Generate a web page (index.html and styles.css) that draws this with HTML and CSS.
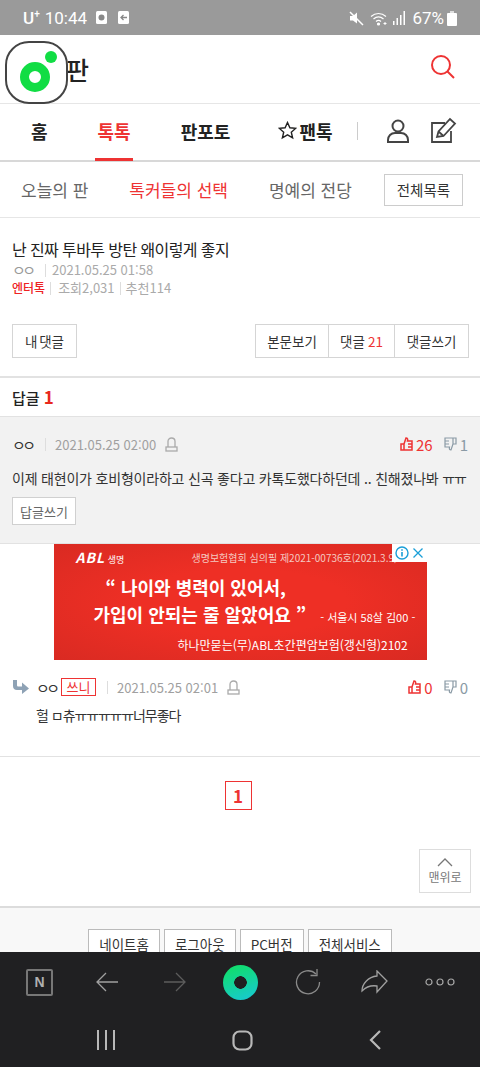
FILE: index.html
```html
<!DOCTYPE html>
<html lang="ko">
<head>
  <meta charset="UTF-8">
  <meta name="viewport" content="width=device-width, initial-scale=1.0">
  <title>네이트 판</title>
  <link rel="stylesheet" href="styles.css">
</head>
<body>
  <div class="status-bar">
    <div class="status-left">
      <span class="carrier">U<sup>+</sup></span>
      <span class="clock">10:44</span>
      <svg class="status-icon" width="12" height="14" viewBox="0 0 12 14"><rect width="11" height="13" rx="1.5" fill="#fff"/><circle cx="5.5" cy="6.5" r="3" fill="#888"/></svg>
      <svg class="status-icon back-note" width="12" height="14" viewBox="0 0 12 14"><rect width="11" height="13" rx="1.5" fill="#fff"/><path d="M9 6.500H3M5.500 4L3 6.500 5.500 9" stroke="#888" stroke-width="1.300" fill="none"/></svg>
    </div>
    <div class="status-right">
      <svg width="15" height="15" viewBox="0 0 15 15"><path d="M1 5h3l4-3.500v11L4 9.500H1z" fill="#fff"/><path d="M1 1l13 13" stroke="#fff" stroke-width="1.500"/></svg>
      <svg class="wifi" width="20" height="15" viewBox="0 0 20 15" fill="none" stroke="#fff" stroke-width="1.200"><path d="M1 5.500c4.500-4 10.500-4 15 0M3.500 8c3-2.600 7-2.600 10 0M6 10.500c1.600-1.300 3.400-1.300 5 0"/><circle cx="8.500" cy="13" r="1" fill="#fff"/><path d="M15 11v3M13.500 12.500h3" stroke-width="1"/></svg>
      <svg width="13" height="14" viewBox="0 0 13 14" fill="#fff"><rect x="0" y="10" width="1.500" height="4"/><rect x="3.500" y="7" width="1.500" height="7"/><rect x="7" y="4" width="1.500" height="10"/><rect x="10.500" y="0" width="1.500" height="14"/></svg>
      <span class="battery-text">67%</span>
      <svg width="10" height="15" viewBox="0 0 10 15"><rect x="3" y="0" width="4" height="2" fill="#ddd"/><rect x="0" y="2" width="10" height="13" rx="1" fill="#fff"/></svg>
    </div>
  </div>

  <header class="top-header">
    <h1 class="site-title">판</h1>
    <svg class="search-icon" width="26" height="26" viewBox="0 0 26 26" fill="none" stroke="#ee3333" stroke-width="2"><circle cx="11" cy="11" r="9"/><path d="M17.500 17.500L24 24"/></svg>
  </header>

  <div class="floating-logo">
    <span class="logo-dot"></span>
    <span class="logo-ring"></span>
  </div>

  <nav class="main-nav">
    <a class="nav-home">홈</a>
    <a class="nav-talk">톡톡</a>
    <a class="nav-photo">판포토</a>
    <a class="nav-fan">
      <svg width="19" height="19" viewBox="0 0 19 19" fill="none" stroke="#222" stroke-width="1.400"><path d="M9.500 1.500l2.400 5.300 5.700.6-4.300 3.800 1.300 5.700-5.100-3-5.100 3 1.300-5.700L1.400 7.400l5.700-.6z"/></svg>
      팬톡
    </a>
    <span class="nav-sep"></span>
    <svg class="nav-user" width="22" height="24" viewBox="0 0 22 24" fill="none" stroke="#444" stroke-width="2"><circle cx="11" cy="7" r="5.500"/><path d="M1 23v-2c0-4 3-7 7-7h6c4 0 7 3 7 7v2z"/></svg>
    <svg class="nav-write" width="27" height="27" viewBox="0 0 27 27" fill="none" stroke="#444" stroke-width="1.800"><path d="M21 14v11H2V6h13"/><path d="M7 20l1.500-5.500L20 2l5 4.500-11.500 12.500z"/><path d="M8.500 14.500l5 4.500"/></svg>
  </nav>

  <div class="sub-nav">
    <a class="sub-link">오늘의 판</a>
    <a class="sub-link active">톡커들의 선택</a>
    <a class="sub-link">명예의 전당</a>
    <a class="all-list">전체목록</a>
  </div>

  <section class="article-head">
    <h2 class="article-title">난 진짜 투바투 방탄 왜이렇게 좋지</h2>
    <p class="meta-line"><span class="writer">ㅇㅇ</span><span class="bar"></span>2021.05.25 01:58</p>
    <p class="meta-line"><span class="category">엔터톡</span><span class="bar"></span>조회2,031<span class="bar small"></span>추천114</p>
  </section>

  <div class="button-row">
    <a class="box-btn my-btn">내 댓글</a>
    <div class="btn-group">
      <a class="box-btn">본문보기</a>
      <a class="box-btn">댓글 <em>21</em></a>
      <a class="box-btn">댓글쓰기</a>
    </div>
  </div>

  <div class="reply-head">답글 <em>1</em></div>

  <section class="comment best">
    <div class="comment-top">
      <div class="comment-info">
        <span class="nick">ㅇㅇ</span><span class="bar"></span><span class="date">2021.05.25 02:00</span>
        <svg class="bell" width="13" height="15" viewBox="0 0 13 15" fill="none" stroke="#aaa" stroke-width="1.300"><path d="M3 10V4.500C3 2.500 4.500 1 6.500 1S10 2.500 10 4.500V10"/><rect x="1" y="10" width="11" height="4"/></svg>
      </div>
      <div class="votes">
        <svg width="13" height="14" viewBox="0 0 13 14" fill="none" stroke="#e33" stroke-width="1.500"><path d="M1 7h3v6H1zM4 7l2-6c1.500 0 2 1 1.500 3H12v9H4"/><path d="M8 7h4M8 10h4"/></svg>
        <span class="up">26</span>
        <svg class="down-icon" width="13" height="14" viewBox="0 0 13 14" fill="none" stroke="#8a9aa5" stroke-width="1.200"><path d="M12 7H9V1h3zM9 7l-2 6c-1.500 0-2-1-1.500-3H1V1h8"/><path d="M5 4H1M5 7H1"/></svg>
        <span class="down">1</span>
      </div>
    </div>
    <p class="comment-text">이제 태현이가 호비형이라하고 신곡 좋다고 카톡도했다하던데 .. 친해졌나봐 <span class="cry">ㅠㅠ</span></p>
    <a class="reply-btn">답글쓰기</a>
  </section>

  <div class="ad-wrap">
    <div class="ad">
      <div class="ad-top"><span class="ad-logo"><b>ABL</b> 생명</span><span class="ad-review">생명보험협회 심의필 제2021-00736호(2021.3.9)</span></div>
      <div class="ad-quote">“ 나이와 병력이 있어서,</div>
      <div class="ad-quote second">가입이 안되는 줄 알았어요 ”<small>- 서울시 58살 김00 -</small></div>
      <div class="ad-bottom">하나만묻는(무)ABL초간편암보험(갱신형)2102</div>
      <div class="ad-choice">
        <svg width="14" height="14" viewBox="0 0 14 14"><circle cx="7" cy="7" r="6" fill="none" stroke="#1a9fd8" stroke-width="1.400"/><path d="M7 6v4.500M7 3.300v1.500" stroke="#1a9fd8" stroke-width="1.600"/></svg>
        <svg width="12" height="12" viewBox="0 0 12 12"><path d="M1.500 1.500l9 9M10.500 1.500l-9 9" stroke="#1a9fd8" stroke-width="1.300"/></svg>
      </div>
    </div>
  </div>

  <section class="comment sub">
    <div class="comment-top">
      <div class="comment-info">
        <svg class="re-arrow" width="17" height="15" viewBox="0 0 17 15"><path d="M1 0h4v5c0 1 .5 1.500 1.500 1.500H10V2.500l7 6-7 5.500V10H5C2.500 10 1 8.500 1 6z" fill="#8ea2b5"/></svg>
        <span class="nick">ㅇㅇ</span><span class="sunny">쓰니</span><span class="bar"></span><span class="date">2021.05.25 02:01</span>
        <svg class="bell" width="13" height="15" viewBox="0 0 13 15" fill="none" stroke="#aaa" stroke-width="1.300"><path d="M3 10V4.500C3 2.500 4.500 1 6.500 1S10 2.500 10 4.500V10"/><rect x="1" y="10" width="11" height="4"/></svg>
      </div>
      <div class="votes">
        <svg width="13" height="14" viewBox="0 0 13 14" fill="none" stroke="#e33" stroke-width="1.500"><path d="M1 7h3v6H1zM4 7l2-6c1.500 0 2 1 1.500 3H12v9H4"/><path d="M8 7h4M8 10h4"/></svg>
        <span class="up">0</span>
        <svg class="down-icon" width="13" height="14" viewBox="0 0 13 14" fill="none" stroke="#8a9aa5" stroke-width="1.200"><path d="M12 7H9V1h3zM9 7l-2 6c-1.500 0-2-1-1.500-3H1V1h8"/><path d="M5 4H1M5 7H1"/></svg>
        <span class="down">0</span>
      </div>
    </div>
    <p class="comment-text">헐 ㅁ츄<span class="cry">ㅠㅠㅠㅠㅠ</span>너무좋다</p>
  </section>

  <div class="pager-area">
    <div class="pager"><span class="page-num">1</span></div>
    <div class="top-row">
      <a class="to-top">
        <svg width="16" height="9" viewBox="0 0 16 9" fill="none" stroke="#777" stroke-width="1.300"><path d="M1 8l7-7 7 7"/></svg>
        맨위로
      </a>
    </div>
  </div>

  <footer class="footer">
    <a class="foot-btn">네이트홈</a>
    <a class="foot-btn">로그아웃</a>
    <a class="foot-btn">PC버전</a>
    <a class="foot-btn">전체서비스</a>
  </footer>

  <div class="browser-bar">
    <div class="browser-tools">
      <span class="n-btn">N</span>
      <svg class="tool-back" width="23" height="20" viewBox="0 0 23 20" fill="none" stroke="#a0a0a0" stroke-width="1.300"><path d="M22 10H1M10 1l-9 9 9 9"/></svg>
      <svg class="tool-forward" width="23" height="20" viewBox="0 0 23 20" fill="none" stroke="#5c5c5c" stroke-width="1.300"><path d="M1 10h21M13 1l9 9-9 9"/></svg>
      <span class="nate-btn"></span>
      <svg class="tool-reload" width="26" height="26" viewBox="0 0 26 26" fill="none" stroke="#8a8a8a" stroke-width="1.300"><path d="M21 5a11.500 11.500 0 1 0 3.500 8"/><path d="M22 0v6.500h-6.500"/></svg>
      <svg class="tool-share" width="27" height="24" viewBox="0 0 27 24" fill="none" stroke="#a0a0a0" stroke-width="1.300"><path d="M16 1l10 10-10 11v-6C10 15 5 17 1 21c0-7 6-14 15-15z"/></svg>
      <svg class="tool-more" width="30" height="8" viewBox="0 0 30 8" fill="none" stroke="#a8a8a8" stroke-width="1.200"><circle cx="4" cy="4" r="3"/><circle cx="15" cy="4" r="3"/><circle cx="26" cy="4" r="3"/></svg>
    </div>
    <div class="system-nav">
      <svg width="20" height="20" viewBox="0 0 20 20" stroke="#b8b8b8" stroke-width="2"><path d="M2 0v20M10 0v20M18 0v20"/></svg>
      <svg width="21" height="21" viewBox="0 0 21 21" fill="none" stroke="#b8b8b8" stroke-width="2.200"><rect x="1.500" y="1.500" width="18" height="18" rx="6"/></svg>
      <svg width="12" height="20" viewBox="0 0 12 20" fill="none" stroke="#b8b8b8" stroke-width="2.200"><path d="M11 1L2 10l9 9"/></svg>
    </div>
  </div>
</body>
</html>
```

FILE: styles.css
```css
* {
  box-sizing: border-box;
}

html, body {
  margin: 0;
  padding: 0;
}

body {
  width: 480px;
  height: 1067px;
  overflow: hidden;
  position: relative;
  background-color: #fff;
  font-family: "Noto Sans CJK KR", "Noto Sans", sans-serif;
  color: #222;
}

p, h1, h2 {
  margin: 0;
  font-weight: normal;
}

em {
  font-style: normal;
}

.status-bar {
  height: 35px;
  background-color: #9a9a9a;
  display: flex;
  justify-content: space-between;
  align-items: center;
  padding: 1px 23px 0 23px;
  color: #fff;
  font-family: Roboto, sans-serif;
}

.status-left, .status-right {
  display: flex;
  align-items: center;
}

.carrier {
  font-size: 17px;
  font-weight: 500;
}

.carrier sup {
  font-size: 10px;
  line-height: 0;
}

.clock {
  font-size: 17px;
  margin-left: 5px;
  margin-right: 9px;
}

.back-note {
  margin-left: 10px;
}

.status-right {
  gap: 3px;
}

.wifi {
  margin-left: 3px;
}

.battery-text {
  font-size: 17px;
  margin-left: 3px;
}

.top-header {
  height: 69px;
  border-bottom: 1px solid #e6e6e6;
  display: flex;
  justify-content: space-between;
  align-items: center;
  padding: 0 24px 0 66px;
}

.site-title {
  font-size: 25px;
  font-weight: 500;
  color: #222;
}

.search-icon {
  margin-top: -4px;
}

.floating-logo {
  position: absolute;
  left: 5px;
  top: 41px;
  width: 63px;
  height: 63px;
  border: 2px solid #444;
  border-radius: 24px;
  background-color: #fff;
}

.logo-dot {
  position: absolute;
  left: 38px;
  top: 8px;
  width: 12px;
  height: 12px;
  border-radius: 50%;
  background-color: #11dd44;
}

.logo-ring {
  position: absolute;
  left: 13px;
  top: 19px;
  width: 30px;
  height: 30px;
  border-radius: 50%;
  border: 9px solid #11dd44;
  background-color: #fff;
}

.main-nav {
  height: 58px;
  border-bottom: 2px solid #d8d8d8;
  display: flex;
  align-items: center;
  position: relative;
  padding-bottom: 3px;
  font-size: 18px;
  font-weight: 700;
}

.nav-home {
  margin-left: 31px;
}

.nav-talk {
  margin-left: 50px;
  color: #ee3333;
  position: relative;
}

.nav-talk::after {
  content: "";
  position: absolute;
  left: -3px;
  right: -2px;
  top: 40px;
  height: 3px;
  background-color: #ee3333;
}

.nav-photo {
  margin-left: 50px;
}

.nav-fan {
  margin-left: 48px;
  display: flex;
  align-items: center;
  gap: 2px;
}

.nav-sep {
  width: 1px;
  height: 18px;
  background-color: #ccc;
  margin-left: 24px;
}

.nav-user {
  margin-left: 29px;
}

.nav-write {
  margin-left: 21px;
}

.sub-nav {
  height: 56px;
  border-bottom: 1px solid #e6e6e6;
  display: flex;
  align-items: center;
  padding-left: 21px;
  font-size: 17px;
  color: #666;
}

.sub-link {
  margin-right: 41px;
}

.sub-link.active {
  color: #ee3333;
}

.all-list {
  position: relative;
  left: -9px;
  width: 79px;
  height: 32px;
  border: 1px solid #ccc;
  display: flex;
  align-items: center;
  justify-content: center;
  font-size: 14.500px;
  color: #333;
}

.article-head {
  height: 106px;
  padding: 19px 12px 0;
}

.article-title {
  font-size: 16px;
  line-height: 24px;
  color: #222;
  letter-spacing: -0.6px;
}

.meta-line {
  font-size: 13px;
  line-height: 18px;
  color: #aaa;
  display: flex;
  align-items: center;
  white-space: nowrap;
}

.writer, .nick {
  display: inline-block;
  width: 22px;
  font-size: 13px;
  letter-spacing: -3px;
  white-space: nowrap;
  flex-shrink: 0;
  transform: scaleX(1.15);
  transform-origin: left center;
}

.writer {
  color: #999;
}

.category {
  color: #ee2222;
  font-weight: 500;
  font-size: 12px;
}

.bar {
  display: inline-block;
  width: 1px;
  height: 13px;
  background-color: #ddd;
  margin: 0 6px 0 11px;
  flex-shrink: 0;
}

.category + .bar {
  margin: 0 7px 0 5px;
}

.bar.small {
  margin: 0 5px;
}

.button-row {
  display: flex;
  justify-content: space-between;
  padding: 0 11px 0 12px;
  height: 54px;
  border-bottom: 2px solid #e2e2e2;
}

.box-btn {
  height: 34px;
  width: 74px;
  border: 1px solid #d5d5d5;
  display: flex;
  align-items: center;
  justify-content: center;
  font-size: 13.500px;
  color: #333;
  background-color: #fff;
  white-space: nowrap;
}

.my-btn {
  width: 65px;
  word-spacing: -2px;
}

.box-btn em {
  color: #ee3333;
  margin-left: 3px;
}

.btn-group {
  display: flex;
}

.btn-group .box-btn + .box-btn {
  border-left: 0;
}

.btn-group .box-btn:nth-child(2) {
  width: 66px;
}

.reply-head {
  height: 39px;
  border-bottom: 1px solid #e2e2e2;
  padding-left: 12px;
  font-size: 15px;
  font-weight: 500;
  line-height: 38px;
}

.reply-head em {
  color: #e8281c;
  font-size: 17px;
  font-weight: 700;
}

.comment.best {
  height: 127px;
  background-color: #f2f2f2;
  border-bottom: 1px solid #e2e2e2;
  padding: 16px 12px 0;
}

.comment-top {
  display: flex;
  justify-content: space-between;
  align-items: center;
  height: 22px;
}

.comment-info {
  display: flex;
  align-items: center;
  font-size: 13px;
}

.nick {
  color: #333;
}

.comment-info .bar {
  margin: 0 9px 0 11px;
}

.date {
  color: #a0a0a0;
}

.bell {
  margin-left: 9px;
}

.votes {
  display: flex;
  align-items: center;
  font-size: 15px;
  gap: 3px;
}

.up {
  color: #ee3333;
}

.down {
  color: #8a9aa5;
}

.down-icon {
  margin-left: 8px;
}

.comment-text {
  font-size: 14px;
  line-height: 20px;
  margin-top: 13px;
  color: #333;
  white-space: nowrap;
  letter-spacing: -0.2px;
}

.cry {
  letter-spacing: -1.2px;
}

.reply-btn {
  display: flex;
  align-items: center;
  justify-content: center;
  width: 64px;
  height: 28px;
  margin-top: 9px;
  border: 1px solid #d0d0d0;
  background-color: #fff;
  font-size: 13px;
  color: #666;
}

.ad-wrap {
  height: 117px;
  display: flex;
  justify-content: center;
  background-color: #fff;
}

.ad {
  width: 373px;
  height: 116px;
  background: radial-gradient(ellipse at center, #ee2f25 40%, #d92a22 100%);
  color: #fff;
  position: relative;
  padding: 3px 0 0 22px;
  overflow: hidden;
}

.ad-top {
  display: flex;
  align-items: center;
  font-size: 10px;
  height: 20px;
  color: #f5c8c0;
  white-space: nowrap;
}

.ad-logo {
  font-size: 9px;
  width: 116px;
  color: #fff;
}

.ad-logo b {
  font-size: 14px;
  font-style: italic;
  letter-spacing: 1px;
}

.ad-quote {
  font-size: 18px;
  font-weight: 700;
  line-height: 29px;
  margin-left: 30px;
  margin-top: 6px;
  white-space: nowrap;
}

.ad-quote.second {
  margin-left: 18px;
  margin-top: -2px;
}

.ad-quote small {
  font-size: 11px;
  font-weight: 400;
  margin-left: 14px;
}

.ad-bottom {
  font-size: 12px;
  font-weight: 400;
  margin-top: 4px;
  margin-left: 102px;
  white-space: nowrap;
}

.ad-choice {
  position: absolute;
  right: 0;
  top: 0;
  width: 35px;
  height: 18px;
  background-color: #fff;
  display: flex;
  align-items: center;
  justify-content: center;
  gap: 3px;
}

.comment.sub {
  height: 96px;
  border-bottom: 1px solid #e2e2e2;
  padding: 15px 12px 0;
}

.re-arrow {
  margin-right: 7px;
}

.sunny {
  border: 1px solid #ee3333;
  color: #ee3333;
  font-size: 13px;
  line-height: 16px;
  width: 35px;
  text-align: center;
  margin-left: 3px;
}

.comment.sub .comment-text {
  margin-top: 7px;
  padding-left: 24px;
  letter-spacing: -1px;
}

.pager-area {
  height: 151px;
  border-bottom: 2px solid #dcdcdc;
  padding-top: 24px;
}

.pager {
  display: flex;
  justify-content: center;
  padding-right: 4px;
}

.page-num {
  width: 27px;
  height: 29px;
  border: 1px solid #ee3333;
  color: #ee3333;
  font-size: 17px;
  font-weight: 700;
  display: flex;
  align-items: center;
  justify-content: center;
}

.top-row {
  display: flex;
  justify-content: flex-end;
  padding-right: 9px;
  margin-top: 39px;
}

.to-top {
  width: 52px;
  height: 44px;
  border: 1px solid #ddd;
  display: flex;
  flex-direction: column;
  align-items: center;
  justify-content: center;
  gap: 3px;
  font-size: 12px;
  line-height: 14px;
  color: #777;
}

.footer {
  height: 160px;
  background-color: #f8f8f8;
  display: flex;
  justify-content: center;
  gap: 4px;
  padding-top: 21px;
}

.foot-btn {
  height: 30px;
  padding: 0 10px;
  border: 1px solid #bbb;
  background-color: #fff;
  font-size: 13.500px;
  line-height: 28px;
  color: #333;
}

.browser-bar {
  position: absolute;
  left: 0;
  right: 0;
  bottom: 0;
  height: 115px;
  background-color: #202022;
}

.browser-tools {
  height: 60px;
  display: flex;
  align-items: center;
  padding-left: 26px;
}

.tool-back {
  margin-left: 43px;
}

.tool-forward {
  margin-left: 44px;
}

.tool-reload {
  margin-left: 37px;
}

.tool-share {
  margin-left: 40px;
}

.tool-more {
  margin-left: 37px;
}

.n-btn {
  width: 27px;
  height: 27px;
  border: 2px solid #777;
  border-radius: 2px;
  color: #b0b0b0;
  font-family: "Liberation Sans", sans-serif;
  font-weight: 700;
  font-size: 14px;
  display: flex;
  align-items: center;
  justify-content: center;
}

.nate-btn {
  width: 35px;
  height: 35px;
  margin-left: 37px;
  border-radius: 50%;
  background: radial-gradient(circle at center, #202022 6px, transparent 6.500px), linear-gradient(160deg, #10e060, #18c8d8);
}

.system-nav {
  display: flex;
  align-items: center;
  justify-content: space-between;
  padding: 0 99px 0 96px;
  height: 56px;
}
```
